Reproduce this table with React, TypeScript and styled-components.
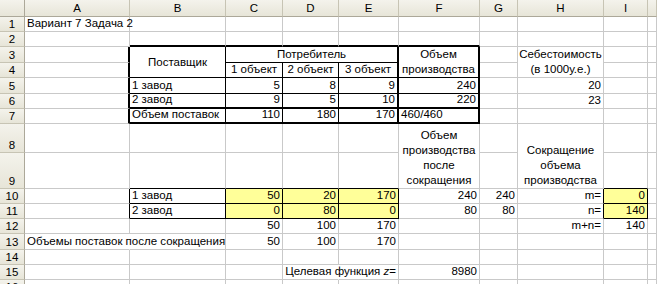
import React from 'react';
import styled, { createGlobalStyle, css } from 'styled-components';

const GlobalStyle = createGlobalStyle`
  html, body {
    margin: 0;
    padding: 0;
    background: #fff;
  }
  body {
    font-family: "Liberation Sans", Arial, sans-serif;
  }
`;

type Align = 'left' | 'center' | 'right';
type VAlign = 'top' | 'middle' | 'bottom';

interface CellDef {
  text: React.ReactNode;
  align?: Align;
  valign?: VAlign;
  cols?: number;
  rows?: number;
  fill?: string;
}

const COLS = ['A', 'B', 'C', 'D', 'E', 'F', 'G', 'H', 'I', 'J'];
const COL_WIDTHS = [105, 96, 57, 56, 60, 81, 38, 86, 44, 9];
const ROW_HEIGHTS = [15, 15, 16, 15, 16, 15, 15, 29, 36, 15, 15, 15, 16, 15, 15, 15];

const GRID = '#c9c9c9';
const YELLOW = '#ffff99';

const key = (c: number, r: number) => `${COLS[c]}${r}`;

const lines = (...parts: string[]) =>
  parts.map((p, i) => (
    <React.Fragment key={i}>
      {i > 0 && <br />}
      {p}
    </React.Fragment>
  ));

const cells: Record<string, CellDef> = {
  A1: { text: 'Вариант 7 Задача 2' },

  B3: { text: 'Поставщик', align: 'center', valign: 'middle', rows: 2 },
  C3: { text: 'Потребитель', align: 'center', cols: 3 },
  F3: { text: lines('Объем', 'производства'), align: 'center', rows: 2 },
  H3: { text: lines('Себестоимость', '(в 1000у.е.)'), align: 'center', rows: 2 },
  C4: { text: '1 объект', align: 'center' },
  D4: { text: '2 объект', align: 'center' },
  E4: { text: '3 объект', align: 'center' },

  B5: { text: '1 завод' }, C5: { text: 5 }, D5: { text: 8 }, E5: { text: 9 }, F5: { text: 240 }, H5: { text: 20 },
  B6: { text: '2 завод' }, C6: { text: 9 }, D6: { text: 5 }, E6: { text: 10 }, F6: { text: 220 }, H6: { text: 23 },
  B7: { text: 'Объем поставок' }, C7: { text: 110 }, D7: { text: 180 }, E7: { text: 170 }, F7: { text: '460/460' },

  F8: { text: lines('Объем', 'производства', 'после', 'сокращения'), align: 'center', rows: 2 },
  H8: { text: lines('Сокращение', 'объема', 'производства'), align: 'center', rows: 2 },

  B10: { text: '1 завод' },
  C10: { text: 50, fill: YELLOW }, D10: { text: 20, fill: YELLOW }, E10: { text: 170, fill: YELLOW },
  F10: { text: 240 }, G10: { text: 240 }, H10: { text: 'm=', align: 'right' }, I10: { text: 0, fill: YELLOW },
  B11: { text: '2 завод' },
  C11: { text: 0, fill: YELLOW }, D11: { text: 80, fill: YELLOW }, E11: { text: 0, fill: YELLOW },
  F11: { text: 80 }, G11: { text: 80 }, H11: { text: 'n=', align: 'right' }, I11: { text: 140, fill: YELLOW },
  C12: { text: 50 }, D12: { text: 100 }, E12: { text: 170 }, H12: { text: 'm+n=', align: 'right' }, I12: { text: 140 },

  A13: { text: 'Объемы поставок после сокращения' },
  C13: { text: 50 }, D13: { text: 100 }, E13: { text: 170 },

  E15: { text: <>Целевая функция <i>z</i>=</>, align: 'right' },
  F15: { text: 8980 },
};

// text spilling into the neighbour hides the gridline it crosses
const spill = new Set(['A13', 'D15']);

// border weights: 0 = gridline, 1 = thin, 2 = medium
const right = new Map<string, number>();
const bottom = new Map<string, number>();

const mark = (m: Map<string, number>, c: number, r: number, w: number) => {
  if (c < 0 || r < 1) return;
  const k = key(c, r);
  m.set(k, Math.max(m.get(k) ?? 0, w));
};

const outline = (c1: number, r1: number, c2: number, r2: number, w: number) => {
  for (let c = c1; c <= c2; c++) {
    mark(bottom, c, r1 - 1, w);
    mark(bottom, c, r2, w);
  }
  for (let r = r1; r <= r2; r++) {
    mark(right, c1 - 1, r, w);
    mark(right, c2, r, w);
  }
};

const allBorders = (c1: number, r1: number, c2: number, r2: number, w: number) => {
  for (let c = c1; c <= c2; c++) for (let r = r1; r <= r2; r++) outline(c, r, c, r, w);
};

// supply table B3:F7
allBorders(1, 3, 5, 7, 1);
outline(1, 3, 5, 7, 2);
outline(1, 7, 5, 7, 2);
outline(5, 3, 5, 7, 2);

// reduced plan
allBorders(1, 10, 1, 11, 1);
allBorders(2, 10, 4, 11, 1);
allBorders(8, 10, 8, 11, 1);

const covered = new Set<string>();
Object.entries(cells).forEach(([k, def]) => {
  const c = COLS.indexOf(k[0]);
  const r = Number(k.slice(1));
  for (let dc = 0; dc < (def.cols ?? 1); dc++)
    for (let dr = 0; dr < (def.rows ?? 1); dr++)
      if (dc || dr) covered.add(key(c + dc, r + dr));
});

const Sheet = styled.div`
  display: grid;
  grid-template-columns: 25px ${COL_WIDTHS.map(w => `${w}px`).join(' ')};
  grid-template-rows: 17px ${ROW_HEIGHTS.map(h => `${h}px`).join(' ')};
  width: 657px;
  height: 284px;
  overflow: hidden;
  background: #fff;
  color: #000;
  font-size: 11.5px;
`;

const headerBase = css`
  display: flex;
  justify-content: center;
  box-sizing: border-box;
  background: linear-gradient(#f4f3ec, #e7e5d8);
  white-space: nowrap;
  overflow: hidden;
  line-height: 14px;
`;

const Corner = styled.div`
  ${headerBase};
  grid-column: 1;
  grid-row: 1;
  border-right: 1px solid #aca899;
  border-bottom: 1px solid #aca899;
`;

const ColHeader = styled.div<{ $col: number }>`
  ${headerBase};
  grid-column: ${p => p.$col};
  grid-row: 1;
  align-items: center;
  border-right: 1px solid #c7c4b4;
  border-bottom: 1px solid #aca899;
`;

const RowHeader = styled.div<{ $row: number }>`
  ${headerBase};
  grid-column: 1;
  grid-row: ${p => p.$row};
  align-items: flex-end;
  border-right: 1px solid #aca899;
  border-bottom: 1px solid #c7c4b4;
`;

const JUSTIFY: Record<Align, string> = { left: 'flex-start', center: 'center', right: 'flex-end' };
const ALIGN: Record<VAlign, string> = { top: 'flex-start', middle: 'center', bottom: 'flex-end' };

const edge = (w: number, hidden = false) =>
  hidden ? '1px solid transparent' : w === 0 ? `1px solid ${GRID}` : `${w}px solid #000`;

const Cell = styled.div<{
  $col: number;
  $row: number;
  $colSpan: number;
  $rowSpan: number;
  $align: Align;
  $valign: VAlign;
  $right: number;
  $bottom: number;
  $spill: boolean;
  $fill?: string;
}>`
  grid-column: ${p => p.$col} / span ${p => p.$colSpan};
  grid-row: ${p => p.$row} / span ${p => p.$rowSpan};
  display: flex;
  justify-content: ${p => JUSTIFY[p.$align]};
  align-items: ${p => ALIGN[p.$valign]};
  min-width: 0;
  padding: 0 2px;
  box-sizing: border-box;
  background: ${p => p.$fill ?? 'transparent'};
  border-right: ${p => edge(p.$right, p.$spill)};
  border-bottom: ${p => edge(p.$bottom)};
  white-space: nowrap;
  line-height: 15px;
  text-align: ${p => p.$align};
`;

export default function App() {
  const body: React.ReactNode[] = [];

  for (let r = 1; r <= ROW_HEIGHTS.length; r++) {
    body.push(
      <RowHeader key={`rh${r}`} $row={r + 1}>
        {r}
      </RowHeader>
    );
    for (let c = 0; c < COLS.length; c++) {
      const k = key(c, r);
      if (covered.has(k)) continue;
      const def = cells[k];
      const cs = def?.cols ?? 1;
      const rs = def?.rows ?? 1;
      const numeric = typeof def?.text === 'number';
      body.push(
        <Cell
          key={k}
          $col={c + 2}
          $row={r + 1}
          $colSpan={cs}
          $rowSpan={rs}
          $align={def?.align ?? (numeric ? 'right' : 'left')}
          $valign={def?.valign ?? 'bottom'}
          $right={right.get(key(c + cs - 1, r)) ?? 0}
          $bottom={bottom.get(key(c, r + rs - 1)) ?? 0}
          $spill={spill.has(k)}
          $fill={def?.fill}
        >
          {def && <span>{def.text}</span>}
        </Cell>
      );
    }
  }

  return (
    <>
      <GlobalStyle />
      <Sheet>
        <Corner />
        {COLS.map((name, i) => (
          <ColHeader key={name} $col={i + 2}>
            {/* the last column is only a sliver at the window edge */}
            {i < COLS.length - 1 ? name : null}
          </ColHeader>
        ))}
        {body}
      </Sheet>
    </>
  );
}
